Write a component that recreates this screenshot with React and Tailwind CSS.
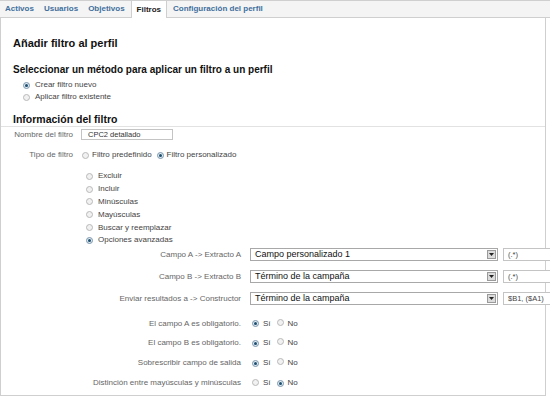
import React from 'react';

const font = { fontFamily: '"Liberation Sans", Arial, sans-serif' };

function Radio({ checked }) {
  return (
    <span
      className={`inline-flex h-[7px] w-[7px] shrink-0 items-center justify-center rounded-full border ${
        checked ? 'border-[#7c97ad] bg-[#dfe9f1]' : 'border-[#b9b9b9] bg-[#f1f1f1]'
      }`}
    >
      {checked && <span className="h-[3px] w-[3px] rounded-full bg-[#1d4f6e]" />}
    </span>
  );
}

function Select({ value }) {
  return (
    <div className="flex h-[13px] w-[248px] shrink-0 items-center justify-between border border-[#a8a8a8] bg-white pl-[4px] pr-[1px]">
      <span className="text-[9px] leading-none text-[#111]">{value}</span>
      <span className="flex h-[9px] w-[9px] items-center justify-center border border-[#9a9a9a] bg-[#dcdcdc]">
        <svg width="5" height="3" viewBox="0 0 5 3">
          <path d="M0 0h5L2.5 3z" fill="#222" />
        </svg>
      </span>
    </div>
  );
}

function SmallInput({ value }) {
  return (
    <div className="ml-[5px] flex h-[13px] w-[60px] shrink-0 items-center border border-[#c4c4c4] bg-white pl-[4px]">
      <span className="text-[7.5px] leading-none text-[#444]">{value}</span>
    </div>
  );
}

export default function App() {
  const tabs = ['Activos', 'Usuarios', 'Objetivos', 'Filtros', 'Configuración del perfil'];
  const ops = ['Excluir', 'Incluir', 'Minúsculas', 'Mayúsculas', 'Buscar y reemplazar', 'Opciones avanzadas'];
  const adv = [
    ['Campo A -> Extracto A', 'Campo personalizado 1', '(.*)'],
    ['Campo B -> Extracto B', 'Término de la campaña', '(.*)'],
    ['Enviar resultados a -> Constructor', 'Término de la campaña', '$B1, ($A1)'],
  ];
  const yesNo = [
    ['El campo A es obligatorio.', true],
    ['El campo B es obligatorio.', true],
    ['Sobrescribir campo de salida', true],
    ['Distinción entre mayúsculas y minúsculas', false],
  ];

  return (
    <div className="h-[396px] w-[550px] overflow-hidden bg-white" style={font}>
      {/* tabs */}
      <div className="flex h-[18px] border-y border-[#cfcfcf] bg-[#f4f4f4]">
        {tabs.map((t) => (
          <div
            key={t}
            className={`flex items-center px-[5px] text-[8px] font-bold ${
              t === 'Filtros'
                ? 'mb-[-1px] ml-[1px] mr-[1px] border-x border-[#cfcfcf] bg-white px-[4px] text-[#222]'
                : 'text-[#3f6f9c]'
            }`}
          >
            {t}
          </div>
        ))}
      </div>

      <div className="h-[378px] w-[546px] border-x border-b border-[#cfcfcf]">
        <div className="pl-[12px] pt-[19px] text-[11px] font-bold leading-[13px] text-[#111]">
          Añadir filtro al perfil
        </div>
        <div className="mt-[14px] pl-[12px] text-[10px] font-bold leading-[12px] text-[#111]">
          Seleccionar un método para aplicar un filtro a un perfil
        </div>
        <div className="mt-[3px] pl-[22px] text-[8px] text-[#444]">
          <div className="flex h-[12px] items-center gap-[5px]">
            <Radio checked />
            Crear filtro nuevo
          </div>
          <div className="flex h-[12px] items-center gap-[5px]">
            <Radio />
            Aplicar filtro existente
          </div>
        </div>

        <div className="mt-[10px] border-b border-[#e2e2e2] pb-[1px] pl-[12px] text-[10.5px] font-bold leading-[12px] text-[#111]">
          Información del filtro
        </div>

        <div className="mt-[2px] flex h-[11px] items-center text-[8px]">
          <div className="w-[72px] shrink-0 text-right text-[#666]">Nombre del filtro</div>
          <div className="ml-[8px] flex h-[11px] w-[92px] items-center border border-[#c4c4c4] pl-[6px] text-[7.5px] text-[#333]">
            CPC2 detallado
          </div>
        </div>

        <div className="mt-[9px] flex h-[12px] items-center text-[8px]">
          <div className="w-[72px] shrink-0 text-right text-[#666]">Tipo de filtro</div>
          <div className="ml-[9px] flex items-center text-[#444]">
            <Radio />
            <span className="ml-[3px]">Filtro predefinido</span>
            <span className="ml-[5px]">
              <Radio checked />
            </span>
            <span className="ml-[3px]">Filtro personalizado</span>
          </div>
        </div>

        <div className="mt-[9px] pl-[85px] text-[8px] text-[#444]">
          {ops.map((o, i) => (
            <div key={o} className="flex h-[12.8px] items-center gap-[5px]">
              <Radio checked={i === ops.length - 1} />
              {o}
            </div>
          ))}
        </div>

        <div className="mt-[-3px] text-[8px]">
          {adv.map(([label, val, extra]) => (
            <div key={label} className="flex h-[22px] items-center">
              <div className="w-[240px] shrink-0 text-right text-[#666]">{label}</div>
              <div className="ml-[9px] flex shrink-0 items-center">
                <Select value={val} />
                <SmallInput value={extra} />
              </div>
            </div>
          ))}
        </div>

        <div className="mt-[4px] text-[8px]">
          {yesNo.map(([label, yes]) => (
            <div key={label} className="flex h-[19.7px] items-center">
              <div className="w-[240px] shrink-0 text-right text-[#666]">{label}</div>
              <div className="ml-[11px] flex items-center text-[#444]">
                <Radio checked={yes} />
                <span className="ml-[4px]">Sí</span>
                <span className="ml-[6px]">
                  <Radio checked={!yes} />
                </span>
                <span className="ml-[4px]">No</span>
              </div>
            </div>
          ))}
        </div>
      </div>
    </div>
  );
}
